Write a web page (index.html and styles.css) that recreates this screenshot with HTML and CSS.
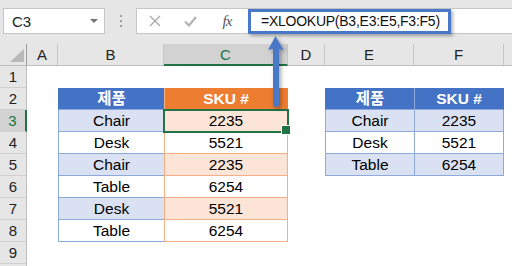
FILE: index.html
```html
<!DOCTYPE html>
<html lang="ko">
<head>
<meta charset="UTF-8">
<title>XLOOKUP</title>
<link rel="stylesheet" href="styles.css">
</head>
<body>
<div class="app">
  <div class="toolbar">
    <div class="name-box"><span class="name">C3</span><span class="caret"></span></div>
    <div class="grip"><i></i><i></i><i></i></div>
    <div class="formula-bar">
      <span class="fx-btn">
        <svg width="12" height="12" viewBox="0 0 12 12"><path d="M1 1 L11 11 M11 1 L1 11" stroke="#a8a8a8" stroke-width="1.3" fill="none"/></svg>
      </span>
      <span class="fx-btn enter">
        <svg width="13" height="11" viewBox="0 0 13 11"><path d="M1 5.5 L5 9.5 L12 1" stroke="#b4b4b4" stroke-width="2.2" fill="none"/></svg>
      </span>
      <span class="fx-btn fx">fx</span>
      <span class="formula">=XLOOKUP(B3,E3:E5,F3:F5)</span>
    </div>
  </div>

  <div class="sheet">
    <div class="corner"><span class="tri"></span></div>
    <div class="col-head">A</div>
    <div class="col-head">B</div>
    <div class="col-head sel">C</div>
    <div class="col-head">D</div>
    <div class="col-head">E</div>
    <div class="col-head">F</div>
    <div class="col-head last"></div>

    <div class="row-head">1</div>
    <div class="row-head">2</div>
    <div class="row-head sel">3</div>
    <div class="row-head">4</div>
    <div class="row-head">5</div>
    <div class="row-head">6</div>
    <div class="row-head">7</div>
    <div class="row-head">8</div>
    <div class="row-head">9</div>
    <div class="row-head"></div>

    <div class="table products">
      <div class="th blue">제품</div>
      <div class="th orange">SKU #</div>
      <div class="td b alt">Chair</div>
      <div class="td c alt active">2235</div>
      <div class="td b">Desk</div>
      <div class="td c">5521</div>
      <div class="td b alt">Chair</div>
      <div class="td c alt">2235</div>
      <div class="td b">Table</div>
      <div class="td c">6254</div>
      <div class="td b alt">Desk</div>
      <div class="td c alt">5521</div>
      <div class="td b">Table</div>
      <div class="td c">6254</div>
    </div>

    <div class="table lookup">
      <div class="th blue">제품</div>
      <div class="th blue second">SKU #</div>
      <div class="td b alt">Chair</div>
      <div class="td b2 alt">2235</div>
      <div class="td b">Desk</div>
      <div class="td b2">5521</div>
      <div class="td b alt">Table</div>
      <div class="td b2 alt">6254</div>
    </div>
  </div>

  <svg class="arrow" width="24" height="78" viewBox="0 0 24 78">
    <line x1="12" y1="14" x2="12" y2="70" stroke="#4a78c8" stroke-width="6" stroke-linecap="round"/>
    <path d="M11.5 2 L19.5 16 Q12 13 4 16 Z" fill="#4a78c8"/>
  </svg>
</div>
</body>
</html>
```

FILE: styles.css
```css
:root {
  --blue: #4472c4;
  --blue-light: #d9e1f2;
  --blue-line: #8eaadb;
  --orange: #ed7d31;
  --orange-light: #fce4d6;
  --orange-line: #f4b084;
  --green: #217346;
  --chrome: #e6e6e6;
  --chrome-line: #c6c6c6;
}

* {
  box-sizing: border-box;
}

html,
body {
  margin: 0;
  background: #fff;
  font-family: "Liberation Sans", "Noto Sans CJK KR", sans-serif;
  color: #000;
}

.app {
  position: relative;
  width: 512px;
  height: 266px;
  overflow: hidden;
}

/* TOOLBAR */
.toolbar {
  height: 44px;
  background: var(--chrome);
  display: flex;
  align-items: flex-start;
  padding: 8px 0 0 3px;
}

.name-box {
  width: 102px;
  height: 26px;
  background: #fff;
  border: 1px solid var(--chrome-line);
  display: flex;
  align-items: center;
  padding: 0 6px 0 8px;
  font-size: 15px;
  color: #222;
}

.caret {
  margin-left: auto;
  width: 0;
  height: 0;
  border-left: 4px solid transparent;
  border-right: 4px solid transparent;
  border-top: 4px solid #777;
}

.grip {
  width: 31px;
  height: 26px;
  display: flex;
  flex-direction: column;
  align-items: center;
  justify-content: center;
  gap: 3px;
}

.grip i {
  width: 2px;
  height: 2px;
  background: #a0a0a0;
}

.formula-bar {
  flex: 1;
  height: 26px;
  background: #fff;
  border: 1px solid var(--chrome-line);
  border-right: 0;
  display: flex;
  align-items: center;
}

.fx-btn {
  width: 36px;
  display: flex;
  justify-content: center;
  align-items: center;
}

.fx-btn.enter {
  width: 35px;
}

.fx-btn.fx {
  width: 38px;
  font-family: "Liberation Serif", serif;
  font-style: italic;
  font-size: 15px;
  color: #555;
  letter-spacing: -1px;
}

.formula {
  align-self: stretch;
  margin: 0 0 -1px 2px;
  width: 203px;
  border: 3px solid #4a78c8;
  box-shadow: 2px 2px 3px rgba(0, 0, 0, 0.3);
  padding: 0 0 0 10px;
  font-size: 14px;
  letter-spacing: -0.25px;
  line-height: 19px;
  color: #111;
  white-space: nowrap;
}

/* SHEET GRID */
.sheet {
  display: grid;
  grid-template-columns: 27px 31px 106px 124px 37px 89px 90px 1fr;
  grid-auto-rows: 22px;
  height: 222px;
  overflow: hidden;
}

.corner,
.col-head {
  background: var(--chrome);
  border-right: 1px solid var(--chrome-line);
  border-bottom: 1px solid #bdbdbd;
  font-size: 15px;
  line-height: 21px;
  text-align: center;
  color: #222;
}

.corner {
  border-right-color: #9e9e9e;
  display: flex;
  align-items: flex-end;
  justify-content: flex-end;
  padding: 0 2px 3px 0;
}

.tri {
  width: 0;
  height: 0;
  border-left: 14px solid transparent;
  border-bottom: 13px solid #b9b9b9;
}

.col-head.last {
  border-right: 0;
}

.col-head.sel {
  background: #d2d2d2;
  color: var(--green);
  border-bottom: 2px solid var(--green);
}

.row-head {
  grid-column: 1;
  background: var(--chrome);
  border-right: 1px solid #bdbdbd;
  border-bottom: 1px solid #d0d0d0;
  font-size: 15px;
  line-height: 21px;
  text-align: center;
  color: #222;
}

.row-head.sel {
  background: #d2d2d2;
  color: var(--green);
  border-right: 2px solid var(--green);
}

/* TABLES */
.table {
  display: grid;
  grid-auto-rows: 22px;
}

.products {
  grid-column: 3 / 5;
  grid-row: 3 / 10;
  grid-template-columns: 106px 124px;
}

.lookup {
  grid-column: 6 / 8;
  grid-row: 3 / 7;
  grid-template-columns: 89px 90px;
}

.th,
.td {
  font-size: 15.5px;
  line-height: 21px;
  text-align: center;
  border-bottom: 1px solid var(--blue-line);
}

.th {
  color: #fff;
  font-weight: bold;
}

.th.blue {
  background: var(--blue);
  border-left: 1px solid var(--blue);
}

.th.blue.second {
  border-left-color: var(--blue-line);
  border-right: 1px solid var(--blue);
}

.th.orange {
  background: var(--orange);
  border-left: 1px solid var(--orange-line);
  border-right: 1px solid var(--orange);
  border-bottom-color: var(--orange-line);
}

.td.b {
  border-left: 1px solid var(--blue-line);
}

.td.b2 {
  border-left: 1px solid var(--blue-line);
  border-right: 1px solid var(--blue-line);
}

.td.b.alt,
.td.b2.alt {
  background: var(--blue-light);
}

.td.c {
  border-left: 1px solid var(--orange-line);
  border-right: 1px solid var(--orange-line);
  border-bottom-color: var(--orange-line);
}

.td.c.alt {
  background: var(--orange-light);
}

.td.active {
  position: relative;
  z-index: 1;
  outline: 2px solid var(--green);
  outline-offset: -1px;
}

.td.active::after {
  content: "";
  position: absolute;
  right: -4px;
  bottom: -4px;
  width: 8px;
  height: 8px;
  background: var(--green);
  border: 1px solid #fff;
}

/* ARROW OVERLAY */
.arrow {
  position: absolute;
  left: 264px;
  top: 34px;
  z-index: 2;
  filter: drop-shadow(2px 2px 2px rgba(0, 0, 0, 0.35));
}
```
